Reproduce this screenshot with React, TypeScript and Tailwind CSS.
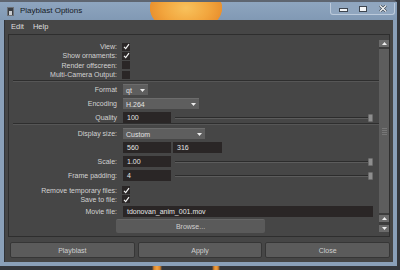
import React from 'react';

const label = 'w-[108px] shrink-0 text-right leading-none text-[#d2d2d2]';

function Check({ checked }: { checked: boolean }) {
  return (
    <div className="w-[8px] h-[8px] bg-[#2a2626] flex items-center justify-center">
      {checked && (
        <svg width="7" height="7" viewBox="0 0 7 7">
          <path d="M1 3.8 L2.7 5.6 L6 1.1" stroke="#f4f4f4" strokeWidth="1.2" fill="none" />
        </svg>
      )}
    </div>
  );
}

function CheckRow({ text, checked }: { text: string; checked: boolean }) {
  return (
    <div className="flex items-center h-[9.33px]">
      <span className={label}>{text}</span>
      <div className="ml-[5px]">
        <Check checked={checked} />
      </div>
    </div>
  );
}

function Arrow() {
  return (
    <svg width="5" height="3" viewBox="0 0 5 3">
      <path d="M0 0 L5 0 L2.5 3 Z" fill="#ececec" />
    </svg>
  );
}

function Dropdown({ value, className }: { value: string; className: string }) {
  return (
    <div
      className={`h-[11px] bg-[#5e5e5e] border-t border-[#6c6c6c] flex items-center justify-between pl-[3px] pr-[3px] text-[#e2e2e2] ${className}`}
    >
      <span className="leading-none">{value}</span>
      <Arrow />
    </div>
  );
}

function Field({ value, className }: { value: string; className: string }) {
  return (
    <div className={`h-[11px] bg-[#2a2626] flex items-center pl-[4px] text-[#e6e6e6] leading-none ${className}`}>
      {value}
    </div>
  );
}

function Slider() {
  return (
    <div className="flex-1 flex items-center ml-[2px] mr-[6px]">
      <div className="flex-1 h-[2px] border-t border-[#2c2c2c] bg-[#5c5c5c]" />
      <div className="w-[5px] h-[8px] rounded-[1px] bg-[#8e8e8e] border border-[#6c6c6c]" />
    </div>
  );
}

function FieldRow({ text, children }: { text: string; children: React.ReactNode }) {
  return (
    <div className="flex items-center h-[11px]">
      <span className={label}>{text}</span>
      <div className="ml-[6px] flex-1 flex items-center gap-[2px]">{children}</div>
    </div>
  );
}

function Separator() {
  return (
    <div className="ml-[4px]">
      <div className="h-px bg-[#2e2e2e]" />
      <div className="h-px bg-[#565656]" />
    </div>
  );
}

function ScrollButton({ up }: { up: boolean }) {
  return (
    <div className="h-[7px] bg-[#6b6b6b] flex items-center justify-center">
      <svg width="5" height="3" viewBox="0 0 5 3">
        <path d={up ? 'M0 3 L5 3 L2.5 0 Z' : 'M0 0 L5 0 L2.5 3 Z'} fill="#eeeeee" />
      </svg>
    </div>
  );
}

export default function App() {
  return (
    <div className="w-[400px] h-[270px] overflow-hidden font-['Liberation_Sans',sans-serif] text-[7px] bg-[linear-gradient(90deg,#34373c_152px,#d9832a_154px,#f2a444_157px,#d9832a_160px,#34373c_162px,#34373c_212px,#d9832a_214px,#f0a040_216px,#d9832a_218px,#34373c_220px)]">
      {/* window */}
      <div className="w-[397px] h-[266px] flex flex-col border-t-2 border-[#5e6570] bg-[#8aa0b9] rounded-tr-[4px]">
        {/* title bar */}
        <div className="h-[18px] flex items-start bg-[radial-gradient(ellipse_38px_26px_at_186px_6px,#f8c25c_0%,#f2a63e_60%,#ea922f_94%,transparent_96%),linear-gradient(180deg,#8ea5bf,#8199b4)]">
          <div className="ml-[7px] mt-[5px] w-[7px] h-[9px] bg-[#3b3e43] border border-[#6d7177] flex items-end justify-center">
            <div className="w-[3px] h-[4px] bg-[#c9ccd0]" />
          </div>
          <span className="ml-[6px] mt-[5px] text-[8px] leading-none text-[#161a1f]">Playblast Options</span>
          <div className="ml-auto mr-[2px] mt-[1px] w-[65px] h-[12px] border border-t-0 border-[#bccadb] rounded-b-[3px] flex items-center bg-[#90a6bf]">
            <div className="w-[24px] flex justify-center pt-[3px]">
              <div className="w-[7px] h-[2px] bg-[#f4f6f8] border border-[#3e4650] box-content" />
            </div>
            <div className="w-[16px] flex justify-center">
              <div className="w-[6px] h-[4px] border-2 border-t-[2px] border-[#f4f6f8] outline outline-1 outline-[#3e4650]" />
            </div>
            <div className="flex-1 flex justify-center">
              <svg width="8" height="7" viewBox="0 0 8 7">
                <path d="M1 0.5 L7 6.5 M7 0.5 L1 6.5" stroke="#3e4650" strokeWidth="2.6" />
                <path d="M1 0.5 L7 6.5 M7 0.5 L1 6.5" stroke="#f4f6f8" strokeWidth="1.3" />
              </svg>
            </div>
          </div>
        </div>

        {/* client area */}
        <div className="flex-1 mx-[4px] mb-[4px] bg-[#464646] border-l border-[#2f3339] flex flex-col">
          {/* menu */}
          <div className="h-[14px] flex items-center pl-[6px] gap-[9px] text-[#dedede] text-[7.5px] leading-none">
            <span>Edit</span>
            <span>Help</span>
          </div>

          {/* options panel */}
          <div className="ml-[3px] mr-[3px] h-[203px] border border-[#2e2e2e] flex">
            <div className="flex-1 flex flex-col pt-[7px]">
              <CheckRow text="View:" checked />
              <CheckRow text="Show ornaments:" checked />
              <CheckRow text="Render offscreen:" checked={false} />
              <CheckRow text="Multi-Camera Output:" checked={false} />

              <div className="mt-[0.7px] mb-[2px]">
                <Separator />
              </div>

              <div className="flex flex-col gap-[3px]">
                <FieldRow text="Format">
                  <Dropdown value="qt" className="w-[25px]" />
                </FieldRow>
                <FieldRow text="Encoding">
                  <Dropdown value="H.264" className="w-[76px]" />
                </FieldRow>
                <FieldRow text="Quality">
                  <Field value="100" className="w-[48px]" />
                  <Slider />
                </FieldRow>
              </div>

              <div className="mb-[3px]">
                <Separator />
              </div>

              <div className="flex flex-col gap-[3px]">
                <FieldRow text="Display size:">
                  <Dropdown value="Custom" className="w-[82px]" />
                </FieldRow>
                <FieldRow text="">
                  <Field value="560" className="w-[48px]" />
                  <Field value="316" className="w-[49px]" />
                </FieldRow>
                <FieldRow text="Scale:">
                  <Field value="1.00" className="w-[48px]" />
                  <Slider />
                </FieldRow>
                <FieldRow text="Frame padding:">
                  <Field value="4" className="w-[48px]" />
                  <Slider />
                </FieldRow>
              </div>

              <div className="mt-[4.5px]">
                <CheckRow text="Remove temporary files:" checked />
                <CheckRow text="Save to file:" checked />
              </div>

              <div className="mt-[2px]">
                <FieldRow text="Movie file:">
                  <Field value="tdonovan_anim_001.mov" className="w-[250px]" />
                </FieldRow>
              </div>

              <div className="mt-[2px] ml-[107px] w-[149px] h-[14px] bg-[#5a5a5a] border-t border-[#666666] rounded-[2px] flex items-center justify-center text-[#cfcfcf] leading-none">
                Browse...
              </div>
            </div>

            {/* scrollbar */}
            <div className="w-[10px] mt-[5px] mb-[4px] flex flex-col bg-[#3c3c3c]">
              <ScrollButton up />
              <div className="flex-1 mt-[2px] mb-[2px] bg-[#5d5d5d] flex flex-col items-center justify-center gap-[1px]">
                <div className="w-[5px] h-px bg-[#777777]" />
                <div className="w-[5px] h-px bg-[#777777]" />
                <div className="w-[5px] h-px bg-[#777777]" />
                <div className="w-[5px] h-px bg-[#777777]" />
              </div>
              <ScrollButton up />
              <div className="h-[3px]" />
              <ScrollButton up={false} />
            </div>
          </div>

          {/* buttons */}
          <div className="mt-[5px] ml-[5px] mr-[3px] grid grid-cols-3 gap-[3px] h-[16px]">
            {['Playblast', 'Apply', 'Close'].map((b) => (
              <div
                key={b}
                className="bg-[#5b5b5b] border border-[#363636] rounded-[2px] flex items-center justify-center text-[#cfcfcf] leading-none"
              >
                {b}
              </div>
            ))}
          </div>
        </div>
      </div>
    </div>
  );
}
